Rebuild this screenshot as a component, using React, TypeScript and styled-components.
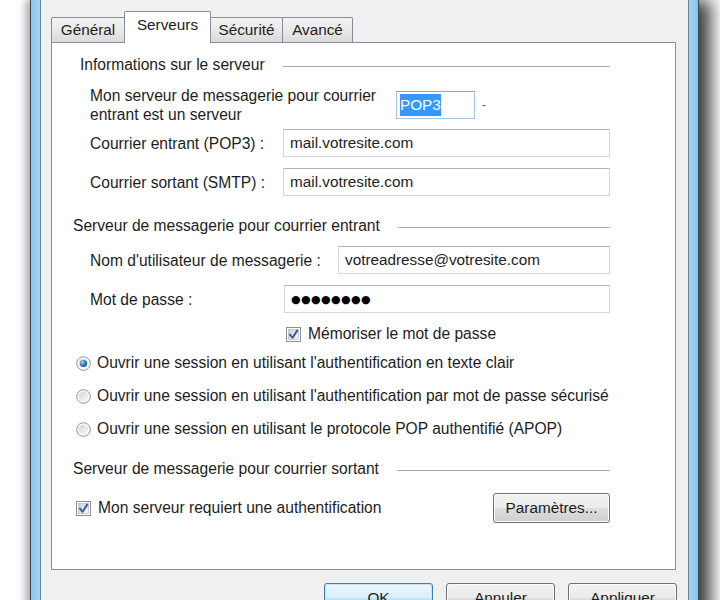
import React from "react";
import styled, { createGlobalStyle } from "styled-components";

const Global = createGlobalStyle`
  html, body { margin: 0; padding: 0; background: #ffffff; overflow: hidden; }
  body { font-family: "Liberation Sans", Arial, sans-serif; color: #1d1d1d; }
`;

const Screen = styled.div`
  width: 720px;
  height: 600px;
  overflow: hidden;
  background: #ffffff;
`;

const Frame = styled.div`
  margin-left: 30px;
  width: 669px;
  height: 640px;
  box-sizing: border-box;
  border-left: 1px solid #3b4752;
  border-right: 1px solid #3b4752;
  padding: 0 9px;
  background: linear-gradient(to right, #86c6ea, #a6d6f0 1.5%, #a6d6f0 98.5%, #86c6ea);
  box-shadow: -5px 0 7px rgba(0, 0, 0, 0.28), 12px 0 16px rgba(0, 0, 0, 0.75);
`;

const Client = styled.div`
  height: 100%;
  box-sizing: border-box;
  border-left: 1px solid #6a8496;
  border-right: 1px solid #6a8496;
  background: #f0f0f0;
  padding: 11px 12px 0 10px;
  font-size: 15.6px;
`;

const TabStrip = styled.div`
  display: flex;
  align-items: flex-end;
  height: 31px;
  position: relative;
  z-index: 2;
  font-size: 15.3px;
`;

const Tab = styled.div<{ $w: number; $active?: boolean }>`
  width: ${(p) => p.$w}px;
  height: ${(p) => (p.$active ? 32 : 25)}px;
  margin-bottom: ${(p) => (p.$active ? -1 : 0)}px;
  box-sizing: border-box;
  margin-left: -1px;
  &:first-child { margin-left: 0; }
  border: 1px solid #898c95;
  border-bottom: none;
  border-radius: 2px 2px 0 0;
  background: ${(p) =>
    p.$active ? "#ffffff" : "linear-gradient(to bottom, #f4f4f4, #e9e9e9 50%, #dbdbdb)"};
  display: flex;
  align-items: ${(p) => (p.$active ? "flex-start" : "center")};
  padding-top: ${(p) => (p.$active ? 4 : 0)}px;
  justify-content: center;
  position: relative;
  z-index: ${(p) => (p.$active ? 3 : 1)};
  white-space: nowrap;
`;

const Panel = styled.div`
  height: 528px;
  box-sizing: border-box;
  border: 1px solid #898c95;
  background: #ffffff;
  padding: 12px 65px 0 21px;
  display: flex;
  flex-direction: column;
`;

const Header = styled.div<{ $mt: number; $indent?: number }>`
  display: flex;
  align-items: center;
  gap: 18px;
  height: 20px;
  margin-top: ${(p) => p.$mt}px;
  margin-left: ${(p) => p.$indent ?? 0}px;
  white-space: nowrap;
`;

const Rule = styled.div`
  flex: 1;
  height: 1px;
  background: #a9a9a9;
  margin-top: 2px;
`;

const Row = styled.div<{ $mt: number; $indent?: number; $h?: number }>`
  display: flex;
  align-items: center;
  margin-top: ${(p) => p.$mt}px;
  margin-left: ${(p) => p.$indent ?? 17}px;
  height: ${(p) => p.$h ?? 28}px;
  white-space: nowrap;
`;

const Label = styled.div<{ $w: number }>`
  width: ${(p) => p.$w}px;
  flex: none;
  line-height: 19px;
`;

const TextBox = styled.div<{ $w?: number; $focus?: boolean }>`
  ${(p) => (p.$w ? `width: ${p.$w}px; flex: none;` : "flex: 1;")}
  height: 28px;
  box-sizing: border-box;
  border: 1px solid ${(p) => (p.$focus ? "#a6c4e0" : "#d4d8dd")};
  border-top-color: ${(p) => (p.$focus ? "#7fa6cc" : "#b0b4ba")};
  background: #ffffff;
  display: flex;
  align-items: center;
  padding-left: ${(p) => (p.$focus ? 3 : 6)}px;
  color: #222;
  font-size: 15.3px;
`;

const Selected = styled.span`
  background: #3399ff;
  color: #ffffff;
  padding: 1px 0;
  line-height: 20px;
`;

const Dash = styled.span`
  margin-left: 7px;
  font-size: 12px;
  color: #555;
`;

const Password = styled.span`
  font-family: "DejaVu Sans", sans-serif;
  font-size: 11px;
  letter-spacing: 0.4px;
  color: #000;
`;

const Check = styled.label<{ $gap: number }>`
  display: flex;
  align-items: center;
  gap: ${(p) => p.$gap}px;
`;

const Spacer = styled.div`
  flex: 1;
`;

const Button = styled.div<{ $w: number; $default?: boolean }>`
  width: ${(p) => p.$w}px;
  height: 30px;
  flex: none;
  box-sizing: border-box;
  border: 1px solid ${(p) => (p.$default ? "#3c7fb1" : "#707070")};
  border-radius: 3px;
  box-shadow: inset 0 0 0 1px ${(p) => (p.$default ? "#bfe6f8" : "#fbfbfb")};
  background: ${(p) =>
    p.$default
      ? "linear-gradient(to bottom, #eaf6fd, #d9f0fc 50%, #bee6fd 51%, #a7d9f5)"
      : "linear-gradient(to bottom, #f2f2f2, #ebebeb 50%, #dddddd 51%, #cfcfcf)"};
  display: flex;
  align-items: center;
  justify-content: center;
  color: #1d1d1d;
  font-size: 15.3px;
`;

const ButtonRow = styled.div`
  display: flex;
  justify-content: flex-end;
  gap: 13px;
  margin-top: 13px;
  margin-right: -1px;
`;

const CheckBox = () => (
  <svg width="15" height="15" viewBox="0 0 15 15">
    <defs>
      <linearGradient id="cbg" x1="0" y1="0" x2="1" y2="1">
        <stop offset="0" stopColor="#cbd1d9" />
        <stop offset="1" stopColor="#f7f7f7" />
      </linearGradient>
    </defs>
    <rect x="0.5" y="0.5" width="14" height="14" fill="#fff" stroke="#8e8f8f" />
    <rect x="2.5" y="2.5" width="10" height="10" fill="url(#cbg)" stroke="#aeb3b9" strokeWidth="0.6" />
    <path d="M4 7.6 L6.6 10.8 L11.2 3.6" fill="none" stroke="#3d5d98" strokeWidth="2" strokeLinecap="round" strokeLinejoin="round" />
  </svg>
);

const Radio = ({ on }: { on?: boolean }) => (
  <svg width="15" height="15" viewBox="0 0 15 15">
    <defs>
      <linearGradient id="rbg" x1="0" y1="0" x2="1" y2="1">
        <stop offset="0" stopColor="#d2d4d6" />
        <stop offset="1" stopColor="#fbfbfb" />
      </linearGradient>
      <radialGradient id="rdot" cx="0.35" cy="0.35" r="0.7">
        <stop offset="0" stopColor="#a9dcfa" />
        <stop offset="0.5" stopColor="#3a86c4" />
        <stop offset="1" stopColor="#1b4f86" />
      </radialGradient>
    </defs>
    <circle cx="7.5" cy="7.5" r="6.8" fill="#fff" stroke="#8e9092" strokeWidth="1" />
    <circle cx="7.5" cy="7.5" r="5" fill="url(#rbg)" />
    {on && <circle cx="7.5" cy="7.5" r="3.6" fill="url(#rdot)" />}
  </svg>
);

export default function App() {
  return (
    <Screen>
      <Global />
      <Frame>
        <Client>
          <TabStrip>
            <Tab $w={74}>Général</Tab>
            <Tab $w={87} $active>Serveurs</Tab>
            <Tab $w={73}>Sécurité</Tab>
            <Tab $w={71}>Avancé</Tab>
          </TabStrip>
          <Panel>
            <Header $mt={0} $indent={7}>
              Informations sur le serveur
              <Rule />
            </Header>
            <Row $mt={11} $h={38}>
              <Label $w={306}>
                Mon serveur de messagerie pour courrier
                <br />
                entrant est un serveur
              </Label>
              <TextBox $w={79} $focus>
                <Selected>POP3</Selected>
              </TextBox>
              <Dash>-</Dash>
            </Row>
            <Row $mt={5}>
              <Label $w={193}>Courrier entrant (POP3) :</Label>
              <TextBox>mail.votresite.com</TextBox>
            </Row>
            <Row $mt={11}>
              <Label $w={193}>Courrier sortant (SMTP) :</Label>
              <TextBox>mail.votresite.com</TextBox>
            </Row>
            <Header $mt={20}>
              Serveur de messagerie pour courrier entrant
              <Rule />
            </Header>
            <Row $mt={10}>
              <Label $w={248}>Nom d'utilisateur de messagerie :</Label>
              <TextBox>votreadresse@votresite.com</TextBox>
            </Row>
            <Row $mt={11}>
              <Label $w={194}>Mot de passe :</Label>
              <TextBox>
                <Password>●●●●●●●●</Password>
              </TextBox>
            </Row>
            <Row $mt={11} $h={20} $indent={213}>
              <Check $gap={7}>
                <CheckBox />
                Mémoriser le mot de passe
              </Check>
            </Row>
            <Row $mt={9} $h={20} $indent={3}>
              <Check $gap={6}>
                <Radio on />
                Ouvrir une session en utilisant l'authentification en texte clair
              </Check>
            </Row>
            <Row $mt={13} $h={20} $indent={3}>
              <Check $gap={6}>
                <Radio />
                Ouvrir une session en utilisant l'authentification par mot de passe sécurisé
              </Check>
            </Row>
            <Row $mt={13} $h={20} $indent={3}>
              <Check $gap={6}>
                <Radio />
                Ouvrir une session en utilisant le protocole POP authentifié (APOP)
              </Check>
            </Row>
            <Header $mt={20}>
              Serveur de messagerie pour courrier sortant
              <Rule />
            </Header>
            <Row $mt={14} $h={30} $indent={3}>
              <Check $gap={7}>
                <CheckBox />
                Mon serveur requiert une authentification
              </Check>
              <Spacer />
              <Button $w={117}>Paramètres...</Button>
            </Row>
          </Panel>
          <ButtonRow>
            <Button $w={109} $default>OK</Button>
            <Button $w={109}>Annuler</Button>
            <Button $w={109}>Appliquer</Button>
          </ButtonRow>
        </Client>
      </Frame>
    </Screen>
  );
}
